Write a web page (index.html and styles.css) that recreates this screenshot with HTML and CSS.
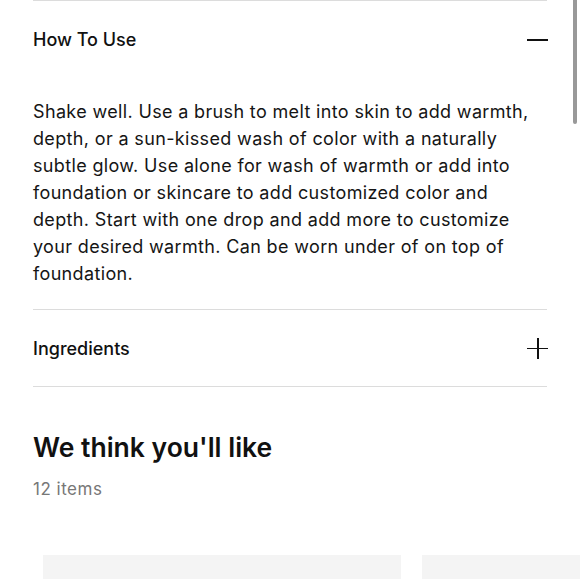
FILE: index.html
```html
<!DOCTYPE html>
<html>
<head>
<meta charset="utf-8">
<link rel="stylesheet" href="styles.css">
</head>
<body>
<div class="page">
  <section class="accordion">
    <div class="acc-item">
      <div class="acc-head">
        <span class="acc-title">How To Use</span>
        <span class="icon minus"></span>
      </div>
      <p class="acc-body">Shake well. Use a brush to melt into skin to add warmth, depth, or a sun-kissed wash of color with a naturally subtle glow. Use alone for wash of warmth or add into foundation or skincare to add customized color and depth. Start with one drop and add more to customize your desired warmth. Can be worn under of on top of foundation.</p>
    </div>
    <div class="acc-item">
      <div class="acc-head">
        <span class="acc-title">Ingredients</span>
        <span class="icon plus"></span>
      </div>
    </div>
  </section>
  <section class="recs">
    <h2 class="recs-title">We think you'll like</h2>
    <div class="recs-count">12 items</div>
    <div class="cards">
      <div class="card"></div>
      <div class="card"></div>
    </div>
  </section>
</div>
<div class="scroll-thumb"></div>
</body>
</html>
```
FILE: styles.css
```css
html, body {
  margin: 0;
  padding: 0;
  background: #fff;
  overflow: hidden;
}
body {
  font-family: Inter, "Liberation Sans", sans-serif;
  color: #111;
  width: 580px;
  height: 580px;
  position: relative;
}
.page {
  padding: 0 33px;
}
.acc-item {
  border-top: 1px solid #dcdcdc;
}
.acc-item:last-child {
  border-bottom: 1px solid #dcdcdc;
}
.acc-head {
  height: 76px;
  display: flex;
  align-items: center;
  justify-content: space-between;
}
.acc-title {
  font-size: 18px;
  font-weight: 500;
}
.icon {
  position: relative;
  width: 21px;
  height: 21px;
  margin-right: -1px;
}
.icon::before, .plus::after {
  content: "";
  position: absolute;
  background: #111;
}
.icon::before {
  left: 0;
  right: 0;
  top: 10px;
  height: 2px;
}
.plus::before { height: 1.5px; }
.plus::after {
  top: 0;
  bottom: 0;
  left: 10px;
  width: 1.5px;
}
.acc-body {
  margin: 0;
  padding: 21px 0 22px;
  font-size: 18px;
  line-height: 27px;
  letter-spacing: 0.35px;
  color: #151515;
}
.recs-title {
  margin: 44px 0 0;
  font-size: 26.5px;
  line-height: 32px;
  font-weight: 600;
}
.recs-count {
  margin-top: 15px;
  font-size: 17px;
  line-height: 22px;
  letter-spacing: 0.5px;
  color: #777;
}
.cards {
  display: flex;
  gap: 21px;
  margin: 55px -33px 0 10px;
  overflow: hidden;
}
.card {
  flex: 0 0 358px;
  height: 24px;
  background: #f4f4f4;
}
.scroll-thumb {
  position: absolute;
  top: 0;
  left: 573px;
  width: 4px;
  height: 124px;
  background: #999;
  border-radius: 0 0 2px 2px;
}
```
